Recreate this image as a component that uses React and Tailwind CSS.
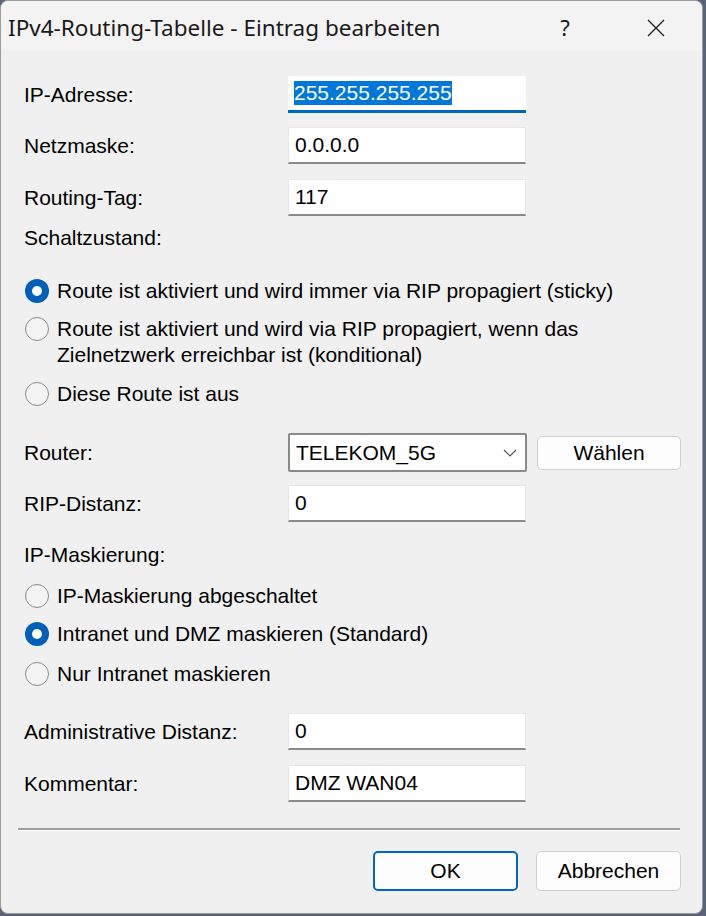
import React from "react";

const Radio = ({ checked }) =>
  checked ? (
    <span className="mt-[1px] flex h-[24px] w-[24px] shrink-0 items-center justify-center rounded-full bg-[#005fb8]">
      <span className="h-[10px] w-[10px] rounded-full bg-white" />
    </span>
  ) : (
    <span className="mt-[1px] h-[24px] w-[24px] shrink-0 rounded-full border-[1.5px] border-[#8b8b8b] bg-[#f4f4f4]" />
  );

const RadioRow = ({ checked, children, className = "" }) => (
  <div className={"flex items-start gap-[8px] pl-[1px] " + className}>
    <Radio checked={checked} />
    <div className="leading-[26px]">{children}</div>
  </div>
);

const Field = ({ label, value, className = "", focused }) => (
  <div className={"flex h-[37px] items-center " + className}>
    <div className="w-[264px]">{label}</div>
    <div
      className={
        "flex h-[37px] w-[238px] items-center bg-white pl-[6px] " +
        (focused
          ? "border-b-[3px] border-[#0067c0]"
          : "border border-[#e6e6e6] border-b-2 border-b-[#8a8a8a]")
      }
    >
      {focused ? (
        <span className="bg-[#0078d7] leading-[24px] text-white">{value}</span>
      ) : (
        value
      )}
    </div>
  </div>
);

export default function App() {
  return (
    <div className="h-[916px] w-[706px] bg-[#5a6478]">
      <div
        className="flex h-[914px] w-[703px] flex-col overflow-hidden rounded-[8px] border border-[#9a9a9a] bg-[#f0f0f0] text-[21px] text-black"
        style={{ fontFamily: '"Liberation Sans", Arial, sans-serif' }}
      >
        {/* Title bar */}
        <div className="flex h-[50px] shrink-0 items-center bg-[#f3f3f3] pt-[3px]">
          <div
            className="pl-[7px] text-[22.5px] text-[#1a1a1a]"
            style={{ fontFamily: '"Noto Sans", sans-serif' }}
          >
            IPv4-Routing-Tabelle - Eintrag bearbeiten
          </div>
          <div className="ml-auto flex items-center">
            <div
              className="w-[40px] text-center text-[22px] text-[#1a1a1a]"
              style={{ fontFamily: '"Noto Sans", sans-serif' }}
            >
              ?
            </div>
            <div className="ml-[59px] mr-[34px] flex w-[24px] justify-center">
              <svg width="20" height="20" viewBox="0 0 20 20">
                <path d="M2 2 L18 18 M18 2 L2 18" stroke="#1a1a1a" strokeWidth="1.3" fill="none" />
              </svg>
            </div>
          </div>
        </div>

        {/* Body */}
        <div className="flex flex-col pl-[23px] pr-[21px]">
          <Field label="IP-Adresse:" value="255.255.255.255" focused className="mt-[25px]" />
          <Field label="Netzmaske:" value="0.0.0.0" className="mt-[14px]" />
          <Field label="Routing-Tag:" value="117" className="mt-[15px]" />

          <div className="mt-[9px] leading-[26px]">Schaltzustand:</div>
          <RadioRow checked className="mt-[27px]">
            Route ist aktiviert und wird immer via RIP propagiert (sticky)
          </RadioRow>
          <RadioRow className="mt-[12px]">
            Route ist aktiviert und wird via RIP propagiert, wenn das
            <br />
            Zielnetzwerk erreichbar ist (konditional)
          </RadioRow>
          <RadioRow className="mt-[13px]">Diese Route ist aus</RadioRow>

          <div className="mt-[26px] flex h-[39px] items-center">
            <div className="w-[264px]">Router:</div>
            <div className="flex h-[39px] w-[239px] items-center justify-between rounded-[2px] border-2 border-[#8a8a8a] bg-white pl-[6px] pr-[8px]">
              <span>TELEKOM_5G</span>
              <svg width="14" height="8" viewBox="0 0 14 8">
                <path d="M1 1 L7 7 L13 1" stroke="#555" strokeWidth="1.2" fill="none" />
              </svg>
            </div>
            <button className="ml-[10px] flex h-[34px] w-[144px] items-center justify-center rounded-[5px] border border-[#d0d0d0] bg-[#fdfdfd]">
              Wählen
            </button>
          </div>
          <Field label="RIP-Distanz:" value="0" className="mt-[13px]" />

          <div className="mt-[20px] leading-[26px]">IP-Maskierung:</div>
          <RadioRow className="mt-[15px]">IP-Maskierung abgeschaltet</RadioRow>
          <RadioRow checked className="mt-[12px]">
            Intranet und DMZ maskieren (Standard)
          </RadioRow>
          <RadioRow className="mt-[14px]">Nur Intranet maskieren</RadioRow>

          <Field label="Administrative Distanz:" value="0" className="mt-[26px]" />
          <Field label="Kommentar:" value="DMZ WAN04" className="mt-[15px]" />
        </div>

        <div className="ml-[17px] mr-[22px] mt-[26px] border-t-2 border-b border-t-[#a0a0a0] border-b-white" />

        <div className="mt-[20px] flex justify-end gap-[18px] pr-[21px]">
          <button className="flex h-[40px] w-[145px] items-center justify-center rounded-[5px] border-2 border-[#0067c0] bg-[#fdfdfd]">
            OK
          </button>
          <button className="flex h-[40px] w-[145px] items-center justify-center rounded-[5px] border border-[#d0d0d0] bg-[#fdfdfd]">
            Abbrechen
          </button>
        </div>
      </div>
    </div>
  );
}
